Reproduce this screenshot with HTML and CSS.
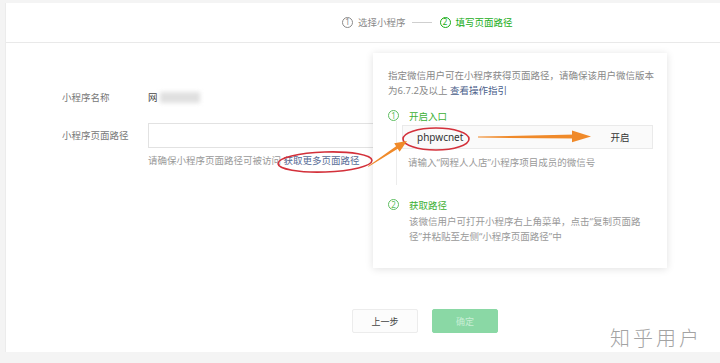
FILE: index.html
```html
<!DOCTYPE html>
<html lang="zh-CN">
<head>
    <meta charset="UTF-8">
    <meta name="viewport" content="width=device-width, initial-scale=1.0">
    <title>填写页面路径</title>
    <link rel="stylesheet" href="styles.css">
</head>
<body>
    <div class="page">
        <!-- Steps -->
        <div class="header">
            <div class="steps">
                <span class="step">
                    <span class="num">1</span>
                    选择小程序
                </span>
                <span class="step-line"></span>
                <span class="step active">
                    <span class="num">2</span>
                    填写页面路径
                </span>
            </div>
        </div>

        <!-- Form -->
        <div class="form">
            <div class="form-row">
                <div class="form-label">小程序名称</div>
                <div class="form-value">网<span class="blurred"></span></div>
            </div>
            <div class="form-row path-row">
                <div class="form-label">小程序页面路径</div>
                <div class="form-field">
                    <div class="text-input"></div>
                    <p class="form-tip">请确保小程序页面路径可被访问 <a class="link">获取更多页面路径</a></p>
                </div>
            </div>
        </div>

        <div class="footer">
            <button class="btn">上一步</button>
            <button class="btn btn-primary" disabled>确定</button>
        </div>

        <!-- Popover -->
        <div class="popover">
            <p class="popover-intro">指定微信用户可在小程序获得页面路径，请确保该用户微信版本<br>为6.7.2及以上 <a class="link strong">查看操作指引</a></p>

            <div class="guide-title">
                <span class="num">1</span>
                开启入口
            </div>
            <div class="guide-body has-line">
                <div class="open-box">
                    <span class="open-value">phpwcnet</span>
                    <span class="open-btn">开启</span>
                </div>
                <p class="guide-tip">请输入“网程人人店”小程序项目成员的微信号</p>
            </div>

            <div class="guide-title second">
                <span class="num">2</span>
                获取路径
            </div>
            <div class="guide-body">
                <p class="guide-text">该微信用户可打开小程序右上角菜单，点击“复制页面路<br>径”并粘贴至左侧“小程序页面路径”中</p>
            </div>
        </div>

        <div class="watermark">知乎用户</div>
    </div>

    <!-- Annotations drawn over the screenshot -->
    <svg class="marks" width="720" height="363" viewBox="0 0 720 363">
        <ellipse cx="325" cy="162" rx="47" ry="10" transform="rotate(-2 325 162)" fill="none" stroke="#d3303a" stroke-width="1.6"/>
        <ellipse cx="436" cy="139" rx="33" ry="11" fill="none" stroke="#d3303a" stroke-width="1.6"/>
        <polygon points="478,136.6 576,134.6 576,138.6 478,137.6" fill="#f08a2a"/>
        <polygon points="572,130.5 591,136.6 572,142.3" fill="#f08a2a"/>
        <polygon points="368,166.3 396.1,146.2 394.2,143.3 407,141 399.6,151.7 397.7,148.8 368.5,166.8" fill="#f08a2a"/>
    </svg>
</body>
</html>
```

FILE: styles.css
```css
* {
    box-sizing: border-box;
}

body {
    margin: 0;
    width: 720px;
    height: 363px;
    overflow: hidden;
    position: relative;
    background: #f4f4f4;
    font-family: "Noto Sans", "Noto Sans CJK SC", sans-serif;
    font-size: 9.5px;
    color: #666;
}

p {
    margin: 0;
}

.link {
    color: #576b95;
    text-decoration: none;
}

.link.strong {
    color: #4a5e8a;
}

.page {
    position: relative;
    display: flex;
    flex-direction: column;
    margin: 3px 0 0 5px;
    height: 349px;
    background: #fff;
    border-left: 1px solid #ececec;
}

/* Steps header */
.header {
    height: 40px;
    border-bottom: 1px solid #e9e9e9;
    display: flex;
    align-items: center;
    padding-left: 336px;
    padding-bottom: 1px;
}

.steps {
    display: flex;
    align-items: center;
    gap: 6px;
}

.step {
    display: flex;
    align-items: center;
    gap: 5px;
    color: #8a8a8a;
}

.step.active {
    color: #1aad19;
}

.num {
    display: inline-flex;
    align-items: center;
    justify-content: center;
    width: 11px;
    height: 11px;
    border: 1px solid currentColor;
    border-radius: 50%;
    font-size: 8px;
    line-height: 1;
}

.step-line {
    width: 20px;
    height: 1px;
    background: #cfcfcf;
    margin-right: 2px;
}

/* Form */
.form {
    padding: 44px 0 0 56px;
}

.form-row {
    display: flex;
    align-items: center;
    height: 20px;
}

.form-label {
    width: 86px;
    color: #777;
}

.form-value {
    display: flex;
    align-items: center;
    color: #444;
}

.blurred {
    display: inline-block;
    width: 40px;
    height: 11px;
    margin-left: 2px;
    background: #e0e0e0;
    filter: blur(2px);
}

.path-row {
    align-items: flex-start;
    height: auto;
    margin-top: 16px;
}

.path-row .form-label {
    line-height: 25px;
}

.text-input {
    width: 240px;
    height: 25px;
    border: 1px solid #e2e2e2;
}

.form-tip {
    margin-top: 6px;
    line-height: 14px;
    color: #999;
}

/* Footer buttons */
.footer {
    margin-top: auto;
    display: flex;
    gap: 14px;
    padding: 0 0 19px 346px;
}

.btn {
    width: 66px;
    height: 24px;
    border: 1px solid #ececec;
    border-radius: 2px;
    background: #fcfcfc;
    font-family: inherit;
    font-size: 9px;
    color: #444;
}

.btn-primary {
    border-color: #8ad8a5;
    background: #8ad8a5;
    color: #c8eed5;
}

/* Popover */
.popover {
    position: absolute;
    left: 367px;
    top: 50px;
    width: 294px;
    height: 215px;
    padding: 15px 10px 0 15px;
    background: #fff;
    box-shadow: 0 1px 8px rgba(0, 0, 0, 0.12);
    color: #888;
}

.popover-intro {
    line-height: 15px;
}

.guide-title {
    display: flex;
    align-items: center;
    gap: 10px;
    height: 11px;
    margin-top: 12px;
    color: #3cb034;
}

.guide-title.second {
    margin-top: 14px;
}

.guide-title .num {
    color: #5dbe60;
    font-size: 8px;
}

.guide-body {
    margin-left: 21px;
}

.guide-body.has-line {
    margin-left: 8px;
    margin-right: 4px;
    padding: 4px 0 15px 5px;
    border-left: 1px solid #ececec;
}

.open-box {
    display: flex;
    align-items: center;
    height: 24px;
    border: 1px solid #eaeaea;
    background: #fafafa;
}

.open-value {
    flex: 1;
    padding-left: 14px;
    font-size: 10px;
    color: #333;
}

.open-btn {
    width: 64px;
    text-align: center;
    color: #333;
    font-size: 9.5px;
}

.guide-tip {
    margin-top: 6px;
    padding-left: 6px;
    line-height: 15px;
    color: #999;
}

.guide-text {
    margin-top: 4px;
    line-height: 15px;
    color: #999;
}

.watermark {
    position: absolute;
    left: 604px;
    top: 320px;
    font-size: 20px;
    letter-spacing: 3px;
    color: #a3a3a3;
    font-weight: 300;
}

.marks {
    position: absolute;
    left: 0;
    top: 0;
    pointer-events: none;
}
```
